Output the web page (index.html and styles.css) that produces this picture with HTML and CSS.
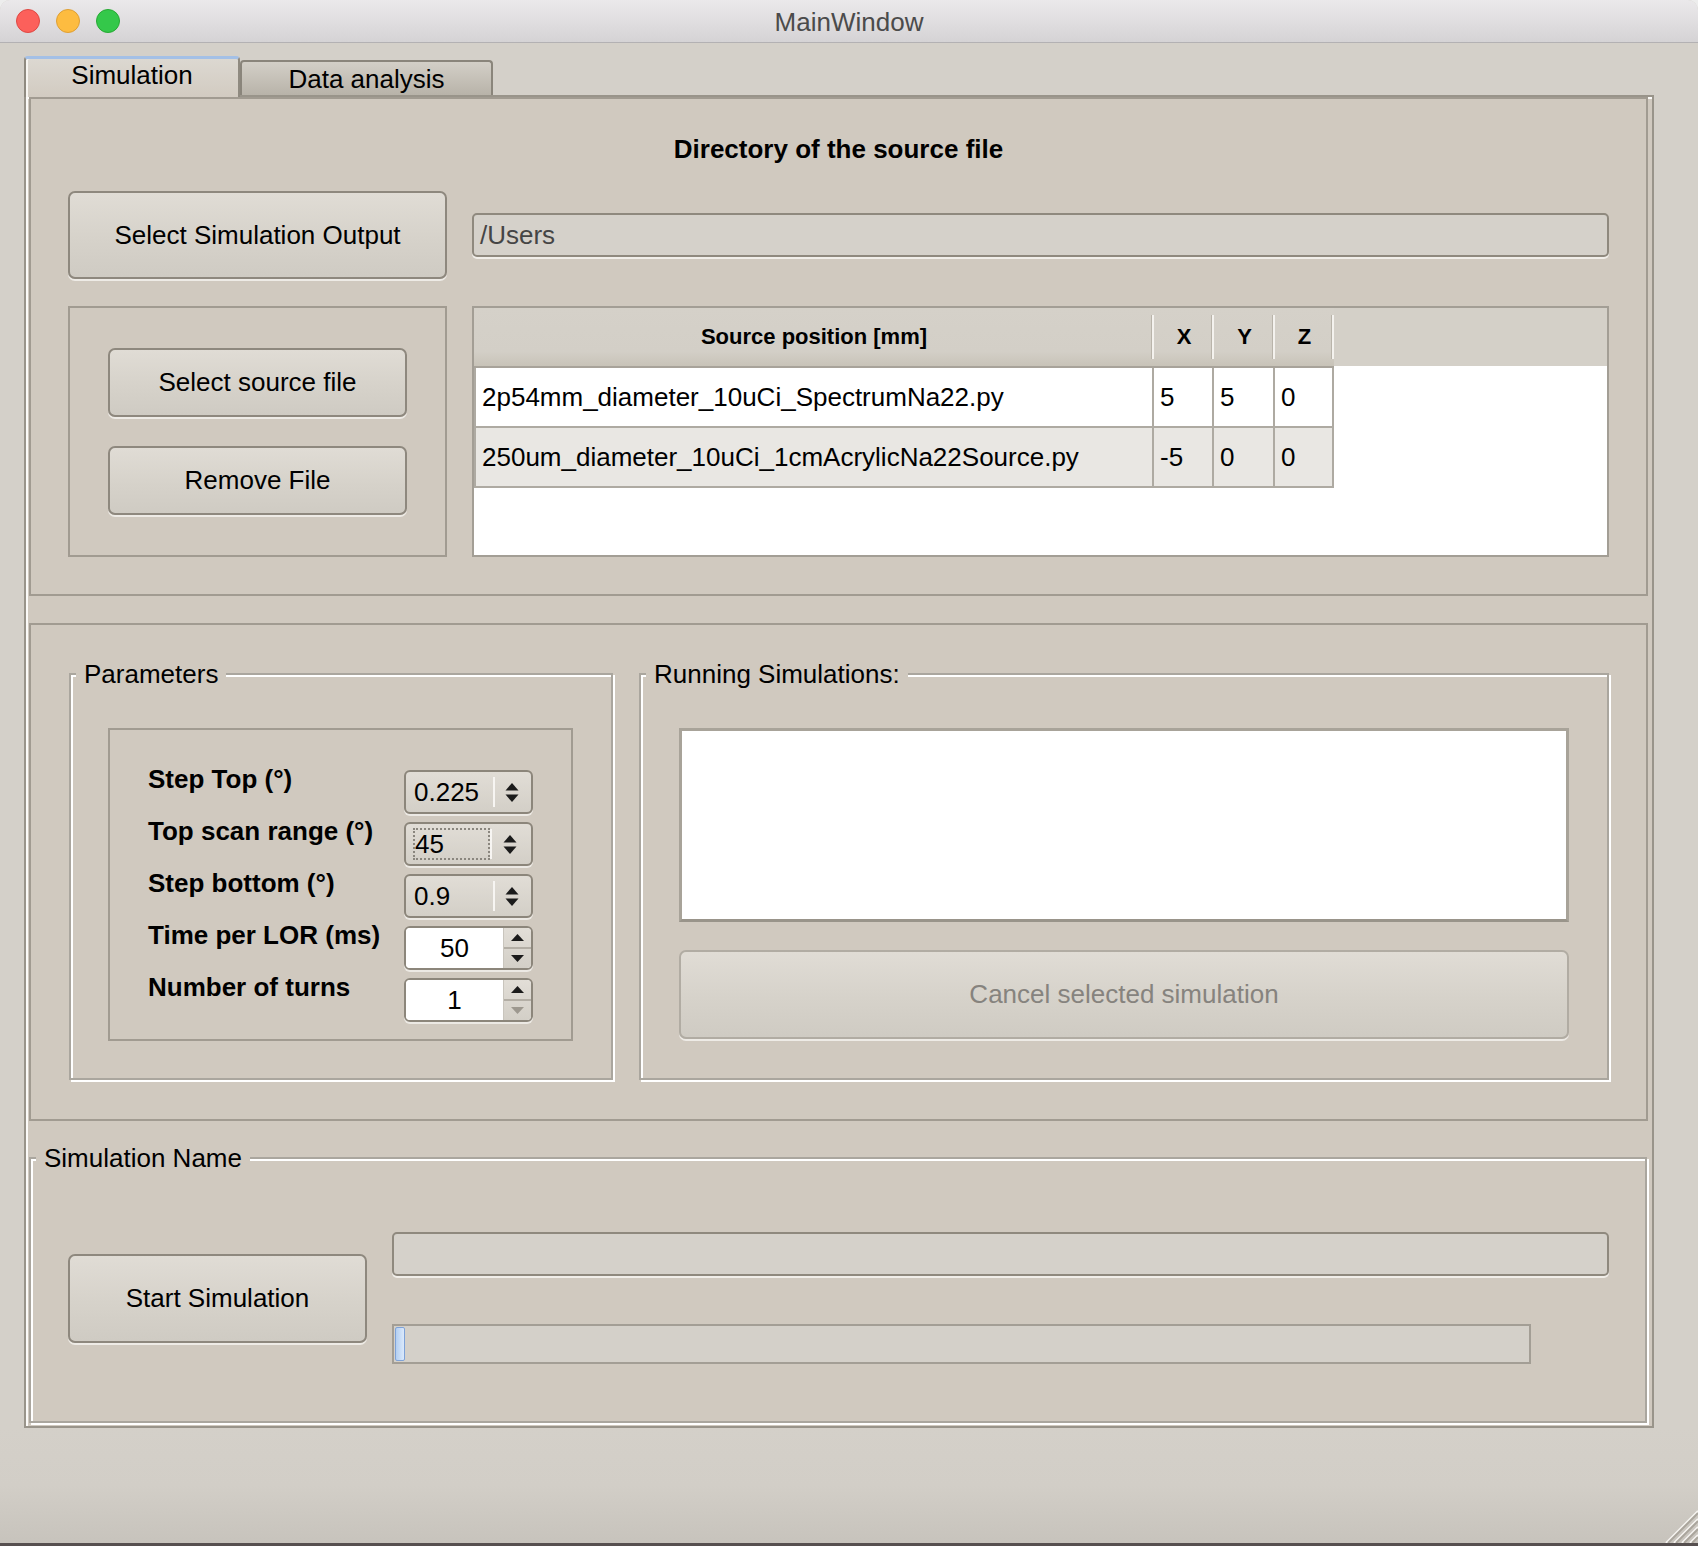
FILE: index.html
```html
<!DOCTYPE html>
<html lang="en">
<head>
<meta charset="utf-8">
<title>MainWindow</title>
<link rel="stylesheet" href="styles.css">
</head>
<body>
<div class="window">
  <header class="titlebar">
    <div class="lights">
      <span class="light red"></span>
      <span class="light yellow"></span>
      <span class="light green"></span>
    </div>
    <div class="title">MainWindow</div>
    <div></div>
  </header>

  <main class="content">
    <div class="tabs">
      <div class="tab active">Simulation</div>
      <div class="tab inactive">Data analysis</div>
    </div>

    <div class="pane">
      <section class="frame source-frame">
        <h2 class="dir-title">Directory of the source file</h2>
        <div class="row-output">
          <button class="btn btn-output">Select Simulation Output</button>
          <div class="lineedit path">/Users</div>
        </div>
        <div class="row-files">
          <div class="frame file-buttons">
            <button class="btn btn-file">Select source file</button>
            <button class="btn btn-file">Remove File</button>
          </div>
          <div class="table-box">
            <div class="grid">
              <div class="th">Source position [mm]</div>
              <div class="th">X</div>
              <div class="th">Y</div>
              <div class="th">Z</div>
              <div class="td first">2p54mm_diameter_10uCi_SpectrumNa22.py</div>
              <div class="td">5</div>
              <div class="td">5</div>
              <div class="td">0</div>
              <div class="td first alt">250um_diameter_10uCi_1cmAcrylicNa22Source.py</div>
              <div class="td alt">-5</div>
              <div class="td alt">0</div>
              <div class="td alt">0</div>
            </div>
          </div>
        </div>
      </section>

      <section class="frame params-frame">
        <fieldset class="group params">
          <legend>Parameters</legend>
          <div class="frame form">
            <label>Step Top (°)</label>
            <div class="spin mac">
              <span class="val">0.225</span><span class="sep"></span>
              <span class="arrows"><svg width="14" height="19" viewBox="0 0 14 19"><polygon points="0.5,7.5 7,0 13.5,7.5" fill="#1b1b1b"/><polygon points="0.5,11.5 13.5,11.5 7,19" fill="#1b1b1b"/></svg></span>
            </div>
            <label>Top scan range (°)</label>
            <div class="spin mac">
              <span class="val focus">45</span><span class="sep"></span>
              <span class="arrows"><svg width="14" height="19" viewBox="0 0 14 19"><polygon points="0.5,7.5 7,0 13.5,7.5" fill="#1b1b1b"/><polygon points="0.5,11.5 13.5,11.5 7,19" fill="#1b1b1b"/></svg></span>
            </div>
            <label>Step bottom (°)</label>
            <div class="spin mac">
              <span class="val">0.9</span><span class="sep"></span>
              <span class="arrows"><svg width="14" height="19" viewBox="0 0 14 19"><polygon points="0.5,7.5 7,0 13.5,7.5" fill="#1b1b1b"/><polygon points="0.5,11.5 13.5,11.5 7,19" fill="#1b1b1b"/></svg></span>
            </div>
            <label>Time per LOR (ms)</label>
            <div class="spin white">
              <span class="val">50</span>
              <span class="btns">
                <span><svg width="13" height="7" viewBox="0 0 13 7"><polygon points="0,7 6.5,0 13,7" fill="#1b1b1b"/></svg></span>
                <span><svg width="13" height="7" viewBox="0 0 13 7"><polygon points="0,0 13,0 6.5,7" fill="#1b1b1b"/></svg></span>
              </span>
            </div>
            <label>Number of turns</label>
            <div class="spin white">
              <span class="val">1</span>
              <span class="btns">
                <span><svg width="13" height="7" viewBox="0 0 13 7"><polygon points="0,7 6.5,0 13,7" fill="#1b1b1b"/></svg></span>
                <span><svg width="13" height="7" viewBox="0 0 13 7"><polygon points="0,0 13,0 6.5,7" fill="#9d988f"/></svg></span>
              </span>
            </div>
          </div>
        </fieldset>

        <fieldset class="group running">
          <legend>Running Simulations:</legend>
          <div class="running-body">
            <div class="list"></div>
            <button class="btn btn-cancel" disabled>Cancel selected simulation</button>
          </div>
        </fieldset>
      </section>

      <fieldset class="group simname">
        <legend>Simulation Name</legend>
        <div class="simname-body">
          <button class="btn btn-start">Start Simulation</button>
          <div class="simname-right">
            <div class="lineedit name"></div>
            <div class="progress"><span class="chunk"></span></div>
          </div>
        </div>
      </fieldset>
    </div>
  </main>

  <footer class="bottom">
    <svg class="grip" width="34" height="34" viewBox="0 0 34 34">
      <g stroke-width="2">
        <line x1="34" y1="2" x2="2" y2="34" stroke="#f7f5f1"/>
        <line x1="34" y1="4" x2="4" y2="34" stroke="#aaa59c"/>
        <line x1="34" y1="10" x2="10" y2="34" stroke="#f7f5f1"/>
        <line x1="34" y1="12" x2="12" y2="34" stroke="#aaa59c"/>
        <line x1="34" y1="18" x2="18" y2="34" stroke="#f7f5f1"/>
        <line x1="34" y1="20" x2="20" y2="34" stroke="#aaa59c"/>
        <line x1="34" y1="26" x2="26" y2="34" stroke="#f7f5f1"/>
        <line x1="34" y1="28" x2="28" y2="34" stroke="#aaa59c"/>
      </g>
    </svg>
  </footer>
</div>
</body>
</html>
```

FILE: styles.css
```css
* { box-sizing: border-box; }

html, body {
  margin: 0;
  padding: 0;
}

body {
  width: 1698px;
  height: 1546px;
  overflow: hidden;
  background: #ededed;
  font-family: "Liberation Sans", Arial, sans-serif;
  font-size: 26px;
  color: #000;
}

.window {
  width: 1698px;
  height: 1546px;
  display: flex;
  flex-direction: column;
  background: #d4d0c9;
  border-radius: 10px 10px 0 0;
  overflow: hidden;
}

/* ---------- title bar ---------- */
.titlebar {
  flex: none;
  height: 43px;
  display: grid;
  grid-template-columns: 1fr auto 1fr;
  align-items: center;
  background: linear-gradient(#ebe9eb, #d5d3d5);
  border-bottom: 1px solid #b3b1b3;
}

.lights {
  display: flex;
  gap: 16px;
  padding-left: 16px;
}

.light {
  width: 24px;
  height: 24px;
  border-radius: 50%;
}
.red { background: #fc605b; border: 1px solid #de4843; }
.yellow { background: #fdbc40; border: 1px solid #de9f34; }
.green { background: #34c84a; border: 1px solid #27a934; }

.title {
  font-size: 26px;
  color: #4b4b4b;
  line-height: 30px;
  padding-top: 2px;
}

/* ---------- tabs ---------- */
.content { flex: none; }

.tabs {
  display: flex;
  align-items: flex-end;
  height: 39px;
  margin: 13px 0 0 24px;
  position: relative;
  z-index: 1;
}

.tab {
  display: flex;
  align-items: center;
  justify-content: center;
  font-size: 26px;
  line-height: 30px;
  border-radius: 4px 4px 0 0;
}

.tab.active {
  width: 216px;
  height: 41px;
  margin-bottom: -2px;
  padding-bottom: 6px;
  background: linear-gradient(#dcd8d1, #d2cbc1);
  border: 2px solid #8f8a80;
  border-top: 3px solid #a4c0e6;
  border-bottom: none;
  box-shadow: inset 2px 0 0 #f7f5f1;
}

.tab.inactive {
  width: 253px;
  height: 35px;
  background: linear-gradient(#d3cfc7, #b8b3a9);
  border: 2px solid #8a857b;
  border-bottom: none;
}

/* ---------- pane ---------- */
.pane {
  margin-left: 24px;
  width: 1630px;
  height: 1333px;
  border: 2px solid #99948a;
  box-shadow: inset 2px 2px 0 #fbfaf8;
  background: #d0c9bf;
  padding: 0 4px 0 3px;
  display: flex;
  flex-direction: column;
}

.frame {
  border: 2px solid #a19b91;
}

/* top frame */
.source-frame {
  flex: none;
  height: 499px;
  padding: 35px 37px 37px;
  display: flex;
  flex-direction: column;
}

.dir-title {
  margin: 0;
  font-size: 26px;
  font-weight: bold;
  line-height: 30px;
  text-align: center;
}

.row-output {
  display: flex;
  align-items: center;
  gap: 25px;
  margin-top: 27px;
  height: 88px;
}

.btn {
  font-family: inherit;
  font-size: 26px;
  color: #000;
  padding: 0;
  border: 2px solid #8e887e;
  border-radius: 7px;
  background: linear-gradient(#e0dcd5, #d6d2ca 55%, #cfcbc3);
  box-shadow: 0 2px 0 #eeebe6;
}

.btn-output {
  flex: none;
  width: 379px;
  height: 88px;
}

.lineedit {
  border: 2px solid #8f897e;
  border-radius: 5px;
  background: #d5d1ca;
  box-shadow: 0 2px 0 #f1eee9;
  display: flex;
  align-items: center;
  padding-left: 6px;
  color: #454545;
  font-size: 26px;
}

.lineedit.path {
  flex: 1;
  height: 44px;
}

.row-files {
  display: flex;
  gap: 25px;
  margin-top: 27px;
  height: 251px;
}

.file-buttons {
  flex: none;
  width: 379px;
  display: flex;
  flex-direction: column;
  align-items: center;
  justify-content: center;
  gap: 29px;
}

.btn-file {
  width: 299px;
  height: 69px;
}

/* table */
.table-box {
  flex: 1;
  border: 2px solid #a39e95;
  background: linear-gradient(#d4d0c8 0, #d4d0c8 58px, #ffffff 58px);
}

.grid {
  display: grid;
  grid-template-columns: 680px 60px 61px 59px;
  grid-auto-rows: 60px;
  width: max-content;
}

.th {
  display: flex;
  align-items: center;
  justify-content: center;
  font-weight: bold;
  font-size: 22px;
  border-bottom: 2px solid #a8a39a;
  background:
    linear-gradient(to right, #b9b4aa 0, #b9b4aa 1px, #f4f2ee 1px, #f4f2ee 3px) right center / 3px 44px no-repeat,
    linear-gradient(#d5d1c9 0, #d3cfc7 75%, #c8c3b8 100%);
}

.td {
  display: flex;
  align-items: center;
  padding-left: 6px;
  background: #ffffff;
  border-right: 2px solid #aeaaa2;
  border-bottom: 2px solid #aeaaa2;
  font-size: 26px;
  white-space: nowrap;
}
.td.first { border-left: 2px solid #aeaaa2; }
.td.alt { background: #e9e7e3; }

/* middle frame */
.params-frame {
  flex: none;
  height: 498px;
  margin-top: 27px;
  padding: 34px 37px 39px 38px;
  display: grid;
  grid-template-columns: 544px 1fr;
  column-gap: 26px;
}

/* group boxes: horizontal padding lives on the inner body so the
   legend stays near the left edge of the frame */
fieldset.group {
  margin: 0;
  min-width: 0;
  border: 2px solid #aaa69e;
  box-shadow: 2px 2px 0 #ffffff, inset 2px 2px 0 #ffffff;
}

fieldset.group legend {
  margin-left: 5px;
  padding: 0 8px;
  font-size: 26px;
  line-height: 30px;
  background: #d0c9bf;
}

fieldset.params {
  padding: 39px 0 37px 0;
}

.form {
  height: 313px;
  margin: 0 38px 0 37px;
  padding: 40px 38px 0 38px;
  display: grid;
  grid-template-columns: 1fr 129px;
  grid-auto-rows: 44px;
  row-gap: 8px;
}

.form label {
  align-self: start;
  font-weight: bold;
  line-height: 18px;
  white-space: nowrap;
}

.spin {
  height: 44px;
  border: 2px solid #8c867b;
  border-radius: 6px;
  display: flex;
  box-shadow: 0 2px 0 #ece9e4;
  overflow: hidden;
  font-size: 26px;
}

.spin.mac {
  background: linear-gradient(#e1ddd6, #d3cfc7);
}

.spin.mac .val {
  flex: none;
  width: 87px;
  display: flex;
  align-items: center;
  padding-left: 8px;
}

.spin.mac .val.focus {
  width: 77px;
  margin: 4px 0 4px 7px;
  padding-left: 0;
  border: 2px dotted #8a867e;
}

.spin .sep {
  flex: none;
  width: 2px;
  margin: 5px 0;
  background: #f7f5f2;
}

.spin .arrows {
  flex: 1;
  display: flex;
  align-items: center;
  justify-content: center;
  padding-right: 3px;
}

.spin.white {
  background: #ffffff;
}

.spin.white .val {
  flex: none;
  width: 97px;
  display: flex;
  align-items: center;
  justify-content: center;
  background: #ffffff;
}

.spin.white .btns {
  flex: 1;
  display: flex;
  flex-direction: column;
  border-left: 1px solid #c9c5bd;
  background: linear-gradient(#e2ded7, #d3cfc7);
}

.spin.white .btns span {
  flex: 1;
  display: flex;
  align-items: center;
  justify-content: center;
}

.spin.white .btns span + span {
  border-top: 2px solid #b3aea5;
}

/* running simulations */
fieldset.running {
  padding: 39px 0 37px 0;
}

.running-body {
  display: flex;
  flex-direction: column;
  padding: 0 38px;
}

.list {
  height: 194px;
  background: #ffffff;
  border: 3px solid #a8a399;
  border-bottom-color: #99948a;
}

.btn-cancel {
  margin-top: 28px;
  height: 89px;
  color: #86837e;
  border-color: #b1aca3;
}

/* simulation name */
fieldset.simname {
  flex: none;
  margin-top: 22px;
  margin-right: 1px;
  height: 280px;
  padding: 59px 0 57px 0;
}

.simname-body {
  display: flex;
  align-items: center;
  gap: 25px;
  padding: 0 36px 0 37px;
}

.btn-start {
  flex: none;
  width: 299px;
  height: 89px;
}

.simname-right {
  flex: 1;
  display: flex;
  flex-direction: column;
}

.lineedit.name {
  height: 44px;
}

.progress {
  margin-top: 48px;
  width: 1139px;
  height: 40px;
  border: 2px solid #a39e95;
  background: #d4d0c9;
  padding: 1px 0 1px 1px;
  display: flex;
}

.chunk {
  width: 10px;
  background: linear-gradient(90deg, #b3cff2, #dbe9fb);
  border: 1px solid #7ea2d8;
  border-radius: 2px;
}

/* bottom strip */
.bottom {
  flex: 1;
  display: flex;
  justify-content: flex-end;
  align-items: flex-end;
  background: linear-gradient(#d4d0c9, #d2cec7 50%, #c7c3bc);
  border-bottom: 3px solid #564f4f;
}

.grip {
  display: block;
}
```
